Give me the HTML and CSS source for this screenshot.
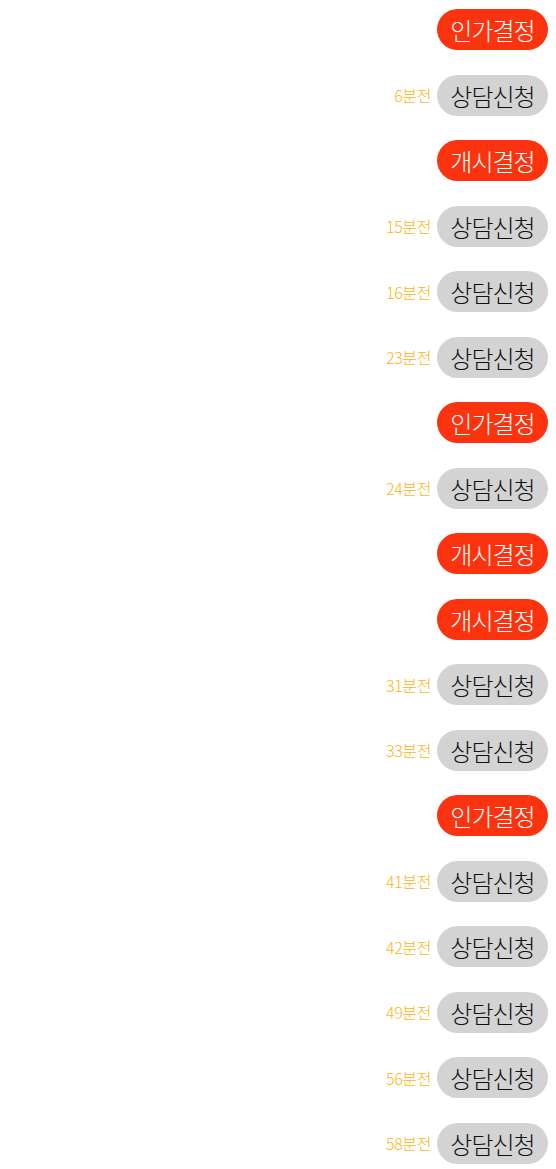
FILE: index.html
```html
<!DOCTYPE html>
<html lang="ko">
<head>
    <meta charset="UTF-8">
    <meta name="viewport" content="width=device-width, initial-scale=1.0">
    <title>실시간 신청 현황</title>
    <link rel="stylesheet" href="styles.css">
</head>
<body>
    <!-- 실시간 목록 -->
    <ul class="feed">
        <li class="row"><span class="tag tag-red">인가결정</span></li>
        <li class="row"><span class="time">6분전</span><span class="tag tag-gray">상담신청</span></li>
        <li class="row"><span class="tag tag-red">개시결정</span></li>
        <li class="row"><span class="time">15분전</span><span class="tag tag-gray">상담신청</span></li>
        <li class="row"><span class="time">16분전</span><span class="tag tag-gray">상담신청</span></li>
        <li class="row"><span class="time">23분전</span><span class="tag tag-gray">상담신청</span></li>
        <li class="row"><span class="tag tag-red">인가결정</span></li>
        <li class="row"><span class="time">24분전</span><span class="tag tag-gray">상담신청</span></li>
        <li class="row"><span class="tag tag-red">개시결정</span></li>
        <li class="row"><span class="tag tag-red">개시결정</span></li>
        <li class="row"><span class="time">31분전</span><span class="tag tag-gray">상담신청</span></li>
        <li class="row"><span class="time">33분전</span><span class="tag tag-gray">상담신청</span></li>
        <li class="row"><span class="tag tag-red">인가결정</span></li>
        <li class="row"><span class="time">41분전</span><span class="tag tag-gray">상담신청</span></li>
        <li class="row"><span class="time">42분전</span><span class="tag tag-gray">상담신청</span></li>
        <li class="row"><span class="time">49분전</span><span class="tag tag-gray">상담신청</span></li>
        <li class="row"><span class="time">56분전</span><span class="tag tag-gray">상담신청</span></li>
        <li class="row"><span class="time">58분전</span><span class="tag tag-gray">상담신청</span></li>
    </ul>
</body>
</html>
```

FILE: styles.css
```css
body {
    margin: 0;
    padding: 9px 8px 0 8px;
    background-color: #fff;
    font-family: "Noto Sans CJK KR", "Noto Sans", sans-serif;
}

.feed {
    list-style: none;
    margin: 0;
    padding: 0;
    display: flex;
    flex-direction: column;
    gap: 24.5px;
}

.row {
    display: flex;
    justify-content: flex-end;
    align-items: center;
    gap: 6px;
    height: 41px;
}

.time {
    font-size: 16px;
    font-weight: 300;
    letter-spacing: -0.4px;
    color: #fbb614;
}

.tag {
    display: inline-flex;
    align-items: center;
    justify-content: center;
    width: 111px;
    height: 41px;
    border-radius: 21px;
    font-size: 24px;
    font-weight: 300;
    letter-spacing: -1px;
}

.tag-red {
    background-color: #fb330e;
    color: #fff;
}

.tag-gray {
    background-color: #d3d3d3;
    color: #111;
}
```
